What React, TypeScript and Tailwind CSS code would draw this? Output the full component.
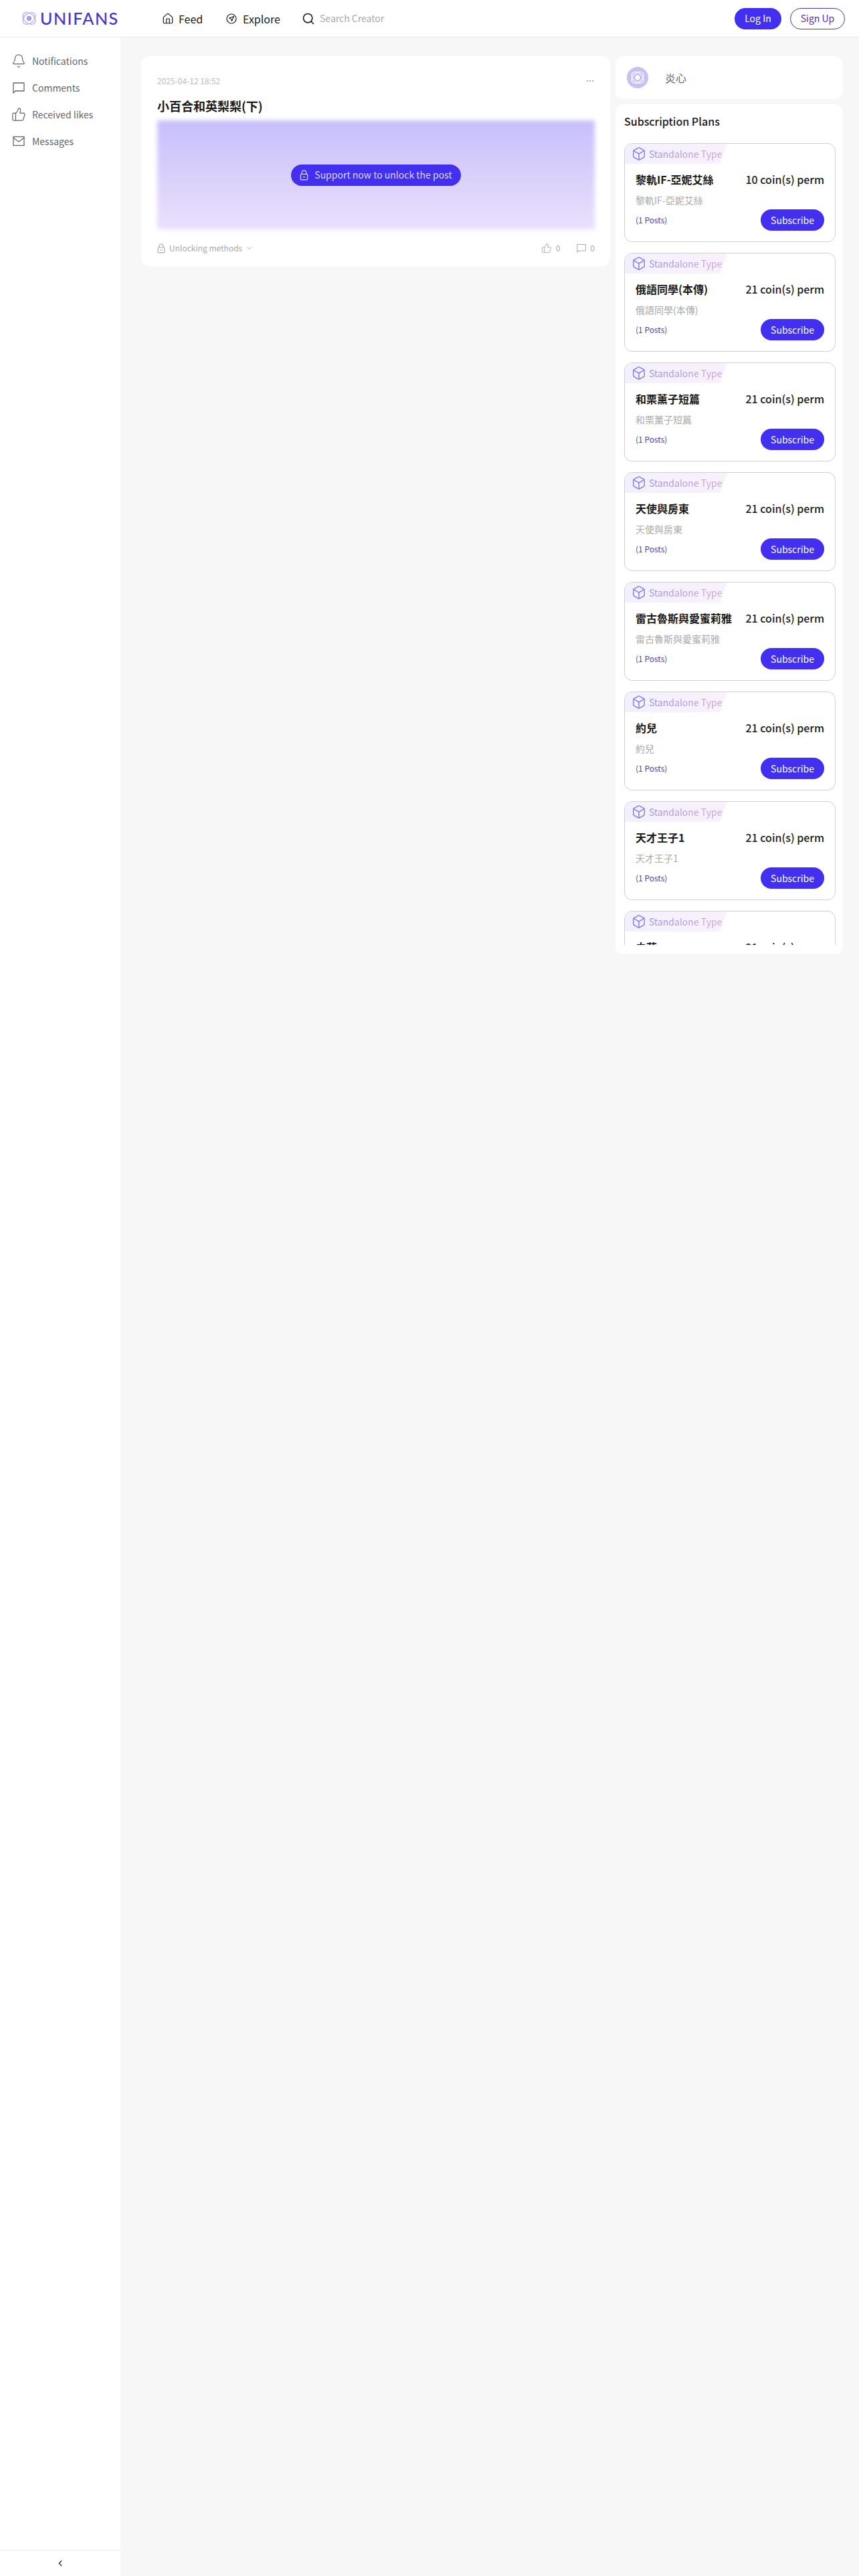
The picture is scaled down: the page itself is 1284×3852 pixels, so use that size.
import { Bell, Box, ChevronDown, ChevronLeft, Ellipsis, House, Search, ThumbsUp } from "lucide-react";

const plans = [
  { name: "黎軌IF-亞妮艾絲", price: 10 },
  { name: "俄語同學(本傳)", price: 21 },
  { name: "和栗薰子短篇", price: 21 },
  { name: "天使與房東", price: 21 },
  { name: "雷古魯斯與愛蜜莉雅", price: 21 },
  { name: "約兒", price: 21 },
  { name: "天才王子1", price: 21 },
  { name: "未花", price: 21 },
];

const LogoMark = ({ className, stroke, core }: { className: string; stroke: string; core: string }) => (
  <svg viewBox="0 0 24 24" fill="none" stroke={stroke} strokeWidth="1.2" className={className}>
    <ellipse cx="12" cy="12" rx="11.2" ry="7.5" transform="rotate(40 12 12)" />
    <ellipse cx="12" cy="12" rx="11.2" ry="7.5" transform="rotate(-40 12 12)" />
    <circle cx="12" cy="12" r="3.8" fill={core} stroke="none" />
  </svg>
);

const LockIcon = ({ className }: { className: string }) => (
  <svg viewBox="0 0 16 20" fill="none" stroke="currentColor" strokeWidth="1.6" className={className}>
    <rect x="1.5" y="8" width="13" height="10.5" rx="1.5" />
    <path d="M4 8V5a4 4 0 0 1 8 0v3" />
    <path d="M6 13.5h4" />
  </svg>
);

const CommentIcon = ({ className }: { className: string }) => (
  <svg viewBox="0 0 18 18" fill="none" stroke="currentColor" strokeWidth="1.3" className={className}>
    <path d="M1 2h16v12H4l-3 3z" strokeLinejoin="round" />
  </svg>
);

const MailIcon = ({ className }: { className: string }) => (
  <svg viewBox="0 0 18 18" fill="none" stroke="currentColor" strokeWidth="1.3" className={className}>
    <rect x="1" y="2.5" width="16" height="13" />
    <path d="M1 4l8 6 8-6" />
  </svg>
);

const ExploreIcon = ({ className }: { className: string }) => (
  <svg viewBox="0 0 16 16" fill="none" stroke="currentColor" strokeWidth="1.2" className={className}>
    <circle cx="8" cy="8" r="7" />
    <path d="M11.5 4.5L4.5 7l3 1.2 1 3z" strokeLinejoin="round" />
  </svg>
);

export default function App() {
  return (
    <div className="flex h-[3852px] flex-col bg-[#f7f7f7] font-['Noto_Sans_CJK_TC','Noto_Sans',sans-serif] text-[#1a1a1a]">
      {/* Top bar */}
      <header className="flex h-[56px] shrink-0 items-center border-b border-[#e8e8e8] bg-white pl-[32px] pr-[21px]">
        <div className="flex w-[210px] items-center gap-[5px]">
          <LogoMark className="h-[23px] w-[23px]" stroke="#b9a6ee" core="#a99aea" />
          <span className="font-['Lato',sans-serif] text-[25px] font-medium leading-none tracking-[1.5px] text-[#4534cc]">
            UNIFANS
          </span>
        </div>
        <nav className="flex items-center">
          <div className="flex w-[96px] items-center gap-[7px] text-[16px]">
            <House className="h-[18px] w-[18px]" strokeWidth={1.6} />
            Feed
          </div>
          <div className="flex w-[115px] items-center gap-[9px] text-[16px]">
            <ExploreIcon className="h-[16px] w-[16px]" />
            Explore
          </div>
          <div className="-ml-[2px] flex items-center gap-[7px] text-[14px] text-[#aaaaaa]">
            <Search className="h-[20px] w-[20px] text-[#222222]" strokeWidth={2} />
            Search Creator
          </div>
        </nav>
        <div className="ml-auto flex items-center gap-[13px] text-[14px]">
          <button className="h-[32px] w-[70px] rounded-full bg-[#432ff0] text-white">Log In</button>
          <button className="h-[32px] w-[82px] rounded-full border border-[#4a3aa8] text-[#4a3aa8]">Sign Up</button>
        </div>
      </header>

      <div className="flex min-h-0 flex-1">
        {/* Sidebar */}
        <aside className="flex w-[180px] shrink-0 flex-col justify-between bg-white">
          <ul className="pl-[17px] pt-[15px] text-[14px] text-[#666666]">
            <li className="flex h-[40px] items-center gap-[9px]">
              <Bell className="h-[22px] w-[22px]" strokeWidth={1.3} />
              Notifications
            </li>
            <li className="flex h-[40px] items-center gap-[11px]">
              <CommentIcon className="ml-[2px] h-[18px] w-[18px]" />
              Comments
            </li>
            <li className="flex h-[40px] items-center gap-[9px]">
              <ThumbsUp className="h-[22px] w-[22px]" strokeWidth={1.3} />
              Received likes
            </li>
            <li className="flex h-[40px] items-center gap-[11px]">
              <MailIcon className="ml-[2px] h-[18px] w-[18px]" />
              Messages
            </li>
          </ul>
          <div className="flex h-[39px] items-center justify-center border-t border-[#e8e8e8]">
            <ChevronLeft className="h-[14px] w-[14px] text-[#333333]" strokeWidth={2.5} />
          </div>
        </aside>

        {/* Content */}
        <main className="flex items-start gap-[8px] pl-[31px] pt-[28px]">
          <article className="w-[701px] rounded-[12px] bg-white pb-[17px] pl-[24px] pr-[23px] pt-[29px]">
            <div className="flex items-center justify-between">
              <span className="text-[12px] leading-[16px] text-[#bbbbbb]">2025-04-12 18:52</span>
              <Ellipsis className="h-[14px] w-[14px] text-[#888888]" strokeWidth={1.5} />
            </div>
            <h1 className="mt-[17px] text-[18px] font-bold leading-[24px]">小百合和英梨梨(下)</h1>
            <div className="relative mt-[10px] flex h-[163px] items-center justify-center">
              <div className="absolute inset-0 bg-gradient-to-b from-[#c7bffb] to-[#ebe0fb] blur-[3px]" />
              <button className="relative flex h-[32px] w-[254px] items-center justify-center gap-[9px] rounded-full bg-[#432ff0] text-[14px] text-[#dcd8ff]">
                <LockIcon className="h-[16px] w-[13px]" />
                Support now to unlock the post
              </button>
            </div>
            <div className="mt-[18px] flex h-[20px] items-center text-[12px] text-[#aaaaaa]">
              <LockIcon className="h-[15px] w-[12px]" />
              <span className="ml-[6px]">Unlocking methods</span>
              <ChevronDown className="ml-[5px] h-[12px] w-[12px]" />
              <ThumbsUp className="ml-auto h-[16px] w-[16px]" strokeWidth={1.4} />
              <span className="ml-[6px]">0</span>
              <CommentIcon className="ml-[25px] h-[14px] w-[14px]" />
              <span className="ml-[6px]">0</span>
            </div>
          </article>

          <div className="flex w-[340px] flex-col gap-[8px]">
            <div className="flex h-[64px] items-center rounded-[12px] bg-white pl-[17px]">
              <div className="flex h-[32px] w-[32px] items-center justify-center rounded-full bg-[#c8c0f5]">
                <LogoMark className="h-[22px] w-[22px]" stroke="#ffffff" core="#ffffff" />
              </div>
              <span className="ml-[25px] text-[16px] text-[#666666]">炎心</span>
            </div>

            <section className="rounded-[12px] bg-white pb-[14px] pl-[13px] pr-[11px]">
              <h2 className="flex h-[58px] items-center pb-[9px] text-[16px] font-medium">Subscription Plans</h2>
              <div className="flex h-[1199px] flex-col gap-[16px] overflow-hidden">
                {plans.map((plan) => (
                  <div key={plan.name} className="h-[148px] shrink-0 overflow-hidden rounded-[12px] border border-[#d0d0d0]">
                    <div className="flex h-[30px] w-[153px] items-center gap-[4px] bg-gradient-to-r from-[#f3f0fd] to-[#f9f1fb] pl-[10px] [clip-path:polygon(0_0,100%_0,93%_100%,0_100%)]">
                      <Box className="h-[22px] w-[22px] text-[#8f86e0]" strokeWidth={1.7} />
                      <span className="bg-gradient-to-r from-[#9c90e2] to-[#cfa6d8] bg-clip-text text-[14px] text-transparent">
                        Standalone Type
                      </span>
                    </div>
                    <div className="px-[16px] pt-[13px]">
                      <div className="flex h-[20px] items-center justify-between text-[16px]">
                        <span className="font-bold">{plan.name}</span>
                        <span className="font-medium">{plan.price} coin(s) perm</span>
                      </div>
                      <p className="mt-[12px] text-[14px] leading-[18px] text-[#aaaaaa]">{plan.name}</p>
                      <div className="mt-[5px] flex items-center justify-between">
                        <span className="text-[12px] text-[#4a3ec0]">(1 Posts)</span>
                        <button className="h-[32px] w-[95px] rounded-full bg-[#432ff0] text-[14px] text-white">Subscribe</button>
                      </div>
                    </div>
                  </div>
                ))}
              </div>
            </section>
          </div>
        </main>
      </div>
    </div>
  );
}
